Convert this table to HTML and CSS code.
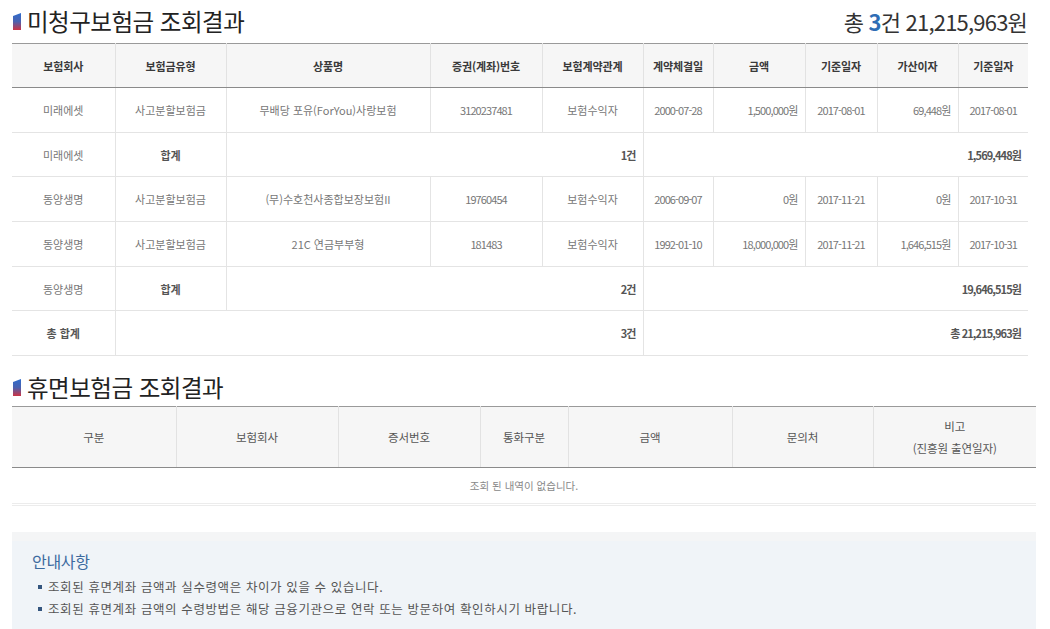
FILE: index.html
```html
<!DOCTYPE html>
<html lang="ko">
<head>
<meta charset="utf-8">
<title>보험금 조회결과</title>
<link rel="stylesheet" href="styles.css">
</head>
<body>
<div class="page">
  <section class="sec">
    <div class="title-row">
      <h2 class="title">
        <svg class="ico" width="8" height="17" viewBox="0 0 8 17"><defs><linearGradient id="g1" x1="0" y1="0" x2="0" y2="1"><stop offset="0" stop-color="#2f6ccc"/><stop offset="0.5" stop-color="#4a62b0"/><stop offset="1" stop-color="#cc3344"/></linearGradient></defs><polygon points="0,3 8,0 8,17 0,17" fill="url(#g1)"/></svg>
        미청구보험금 조회결과
      </h2>
      <div class="total">총 <b>3</b>건 21,215,963원</div>
    </div>
    <table class="tbl t1">
      <colgroup>
        <col style="width:103px"><col style="width:111px"><col style="width:204px"><col style="width:112px"><col style="width:101px">
        <col style="width:70px"><col style="width:92px"><col style="width:72px"><col style="width:81px"><col style="width:70px">
      </colgroup>
      <thead>
        <tr><th>보험회사</th><th>보험금유형</th><th>상품명</th><th>증권(계좌)번호</th><th>보험계약관계</th><th>계약체결일</th><th>금액</th><th>기준일자</th><th>가산이자</th><th>기준일자</th></tr>
      </thead>
      <tbody>
        <tr><td>미래에셋</td><td>사고분할보험금</td><td>무배당 포유(ForYou)사랑보험</td><td class="num">3120237481</td><td>보험수익자</td><td class="num">2000-07-28</td><td class="num r">1,500,000원</td><td class="num">2017-08-01</td><td class="num r">69,448원</td><td class="num">2017-08-01</td></tr>
        <tr class="sum"><td>미래에셋</td><td class="b">합계</td><td colspan="3" class="r b num">1건</td><td colspan="5" class="r b num">1,569,448원</td></tr>
        <tr><td>동양생명</td><td>사고분할보험금</td><td>(무)수호천사종합보장보험II</td><td class="num">19760454</td><td>보험수익자</td><td class="num">2006-09-07</td><td class="num r">0원</td><td class="num">2017-11-21</td><td class="num r">0원</td><td class="num">2017-10-31</td></tr>
        <tr><td>동양생명</td><td>사고분할보험금</td><td>21C 연금부부형</td><td class="num">181483</td><td>보험수익자</td><td class="num">1992-01-10</td><td class="num r">18,000,000원</td><td class="num">2017-11-21</td><td class="num r">1,646,515원</td><td class="num">2017-10-31</td></tr>
        <tr class="sum"><td>동양생명</td><td class="b">합계</td><td colspan="3" class="r b num">2건</td><td colspan="5" class="r b num">19,646,515원</td></tr>
        <tr class="sum"><td class="b">총 합계</td><td colspan="4" class="r b num">3건</td><td colspan="5" class="r b num">총 21,215,963원</td></tr>
      </tbody>
    </table>
  </section>

  <section class="sec sec2">
    <div class="title-row title-row2">
      <h2 class="title">
        <svg class="ico" width="8" height="17" viewBox="0 0 8 17"><defs><linearGradient id="g2" x1="0" y1="0" x2="0" y2="1"><stop offset="0" stop-color="#2f6ccc"/><stop offset="0.5" stop-color="#4a62b0"/><stop offset="1" stop-color="#cc3344"/></linearGradient></defs><polygon points="0,3 8,0 8,17 0,17" fill="url(#g2)"/></svg>
        휴면보험금 조회결과
      </h2>
    </div>
    <table class="tbl t2">
      <colgroup>
        <col style="width:164px"><col style="width:162px"><col style="width:142px"><col style="width:88px"><col style="width:164px"><col style="width:141px"><col style="width:163px">
      </colgroup>
      <thead>
        <tr><th>구분</th><th>보험회사</th><th>증서번호</th><th>통화구분</th><th>금액</th><th>문의처</th><th>비고<br>(진흥원 출연일자)</th></tr>
      </thead>
      <tbody>
        <tr><td colspan="7" class="empty">조회 된 내역이 없습니다.</td></tr>
      </tbody>
    </table>
  </section>

  <div class="notice">
    <h3 class="notice-title">안내사항</h3>
    <ul class="notice-list">
      <li>조회된 휴면계좌 금액과 실수령액은 차이가 있을 수 있습니다.</li>
      <li>조회된 휴면계좌 금액의 수령방법은 해당 금융기관으로 연락 또는 방문하여 확인하시기 바랍니다.</li>
    </ul>
  </div>
</div>
</body>
</html>
```

FILE: styles.css
```css
* { box-sizing: border-box; }
html, body { margin: 0; padding: 0; background: #fff; }
body {
  font-family: "Noto Sans CJK KR", "Noto Sans", sans-serif;
  color: #333;
}
.page {
  width: 1036px;
  padding-left: 12px;
}
.title-row {
  display: flex;
  align-items: center;
  justify-content: space-between;
  width: 1016px;
  height: 43px;
}
.title {
  margin: 0;
  display: flex;
  align-items: center;
  font-size: 23.5px;
  font-weight: 400;
  letter-spacing: -0.5px;
  line-height: 43px;
  color: #222;
}
.ico {
  display: block;
  margin: 0 6px 0 1px;
}
.total {
  font-size: 22px;
  letter-spacing: -0.8px;
  line-height: 43px;
  color: #333;
  margin-right: 1px;
}
.total b {
  color: #2f6db5;
  font-weight: 700;
}

.tbl {
  border-collapse: collapse;
  table-layout: fixed;
  border-top: 1px solid #9a9a9a;
}
.t1 { width: 1016px; }
.t2 { width: 1024px; }
.tbl th {
  height: 44px;
  padding: 0;
  background: #f6f6f6;
  border-bottom: 1px solid #8a8a8a;
  border-left: 1px solid #e2e2e2;
  font-size: 11px;
  font-weight: 700;
  color: #3a3a3a;
  letter-spacing: -0.1px;
  text-align: center;
}
.tbl th:first-child { border-left: 0; }
.tbl td {
  height: 44.7px;
  padding: 0 7px;
  border-bottom: 1px solid #e4e4e4;
  border-left: 1px solid #e4e4e4;
  font-size: 11px;
  color: #777;
  text-align: center;
  letter-spacing: 0;
  white-space: nowrap;
}
.tbl td:first-child { border-left: 0; }
.tbl td.num { letter-spacing: -0.9px; }
.tbl td.r { text-align: right; }
.tbl td.b { font-weight: 700; color: #555; }

.sec2 { margin-top: 12px; }
.title-row2 { height: 38px; }
.title-row2 .title { line-height: 38px; }
.t2 th {
  height: 61px;
  line-height: 22px;
  font-weight: 400;
  color: #555;
  font-size: 11.5px;
}
.t2 td.empty {
  height: 37px;
  font-size: 10.5px;
  color: #888;
  border-bottom: 3px double #ececec;
}

.notice {
  width: 1024px;
  margin-top: 26px;
  height: 110px;
  padding: 18px 20px 0 20px;
  background: linear-gradient(#f4f5f6 0, #f4f5f6 9px, #f0f4f8 9px);
}
.notice-title {
  margin: 0;
  font-size: 16px;
  font-weight: 400;
  color: #3d6b9f;
  line-height: 22px;
  letter-spacing: -0.3px;
}
.notice-list {
  list-style: none;
  margin: 4px 0 0 0;
  padding: 0;
}
.notice-list li {
  position: relative;
  padding-left: 16px;
  font-size: 12.5px;
  letter-spacing: 0.6px;
  line-height: 22px;
  color: #555;
}
.notice-list li::before {
  content: "";
  position: absolute;
  left: 6px;
  top: 9px;
  width: 4px;
  height: 4px;
  background: #34557e;
}
```
